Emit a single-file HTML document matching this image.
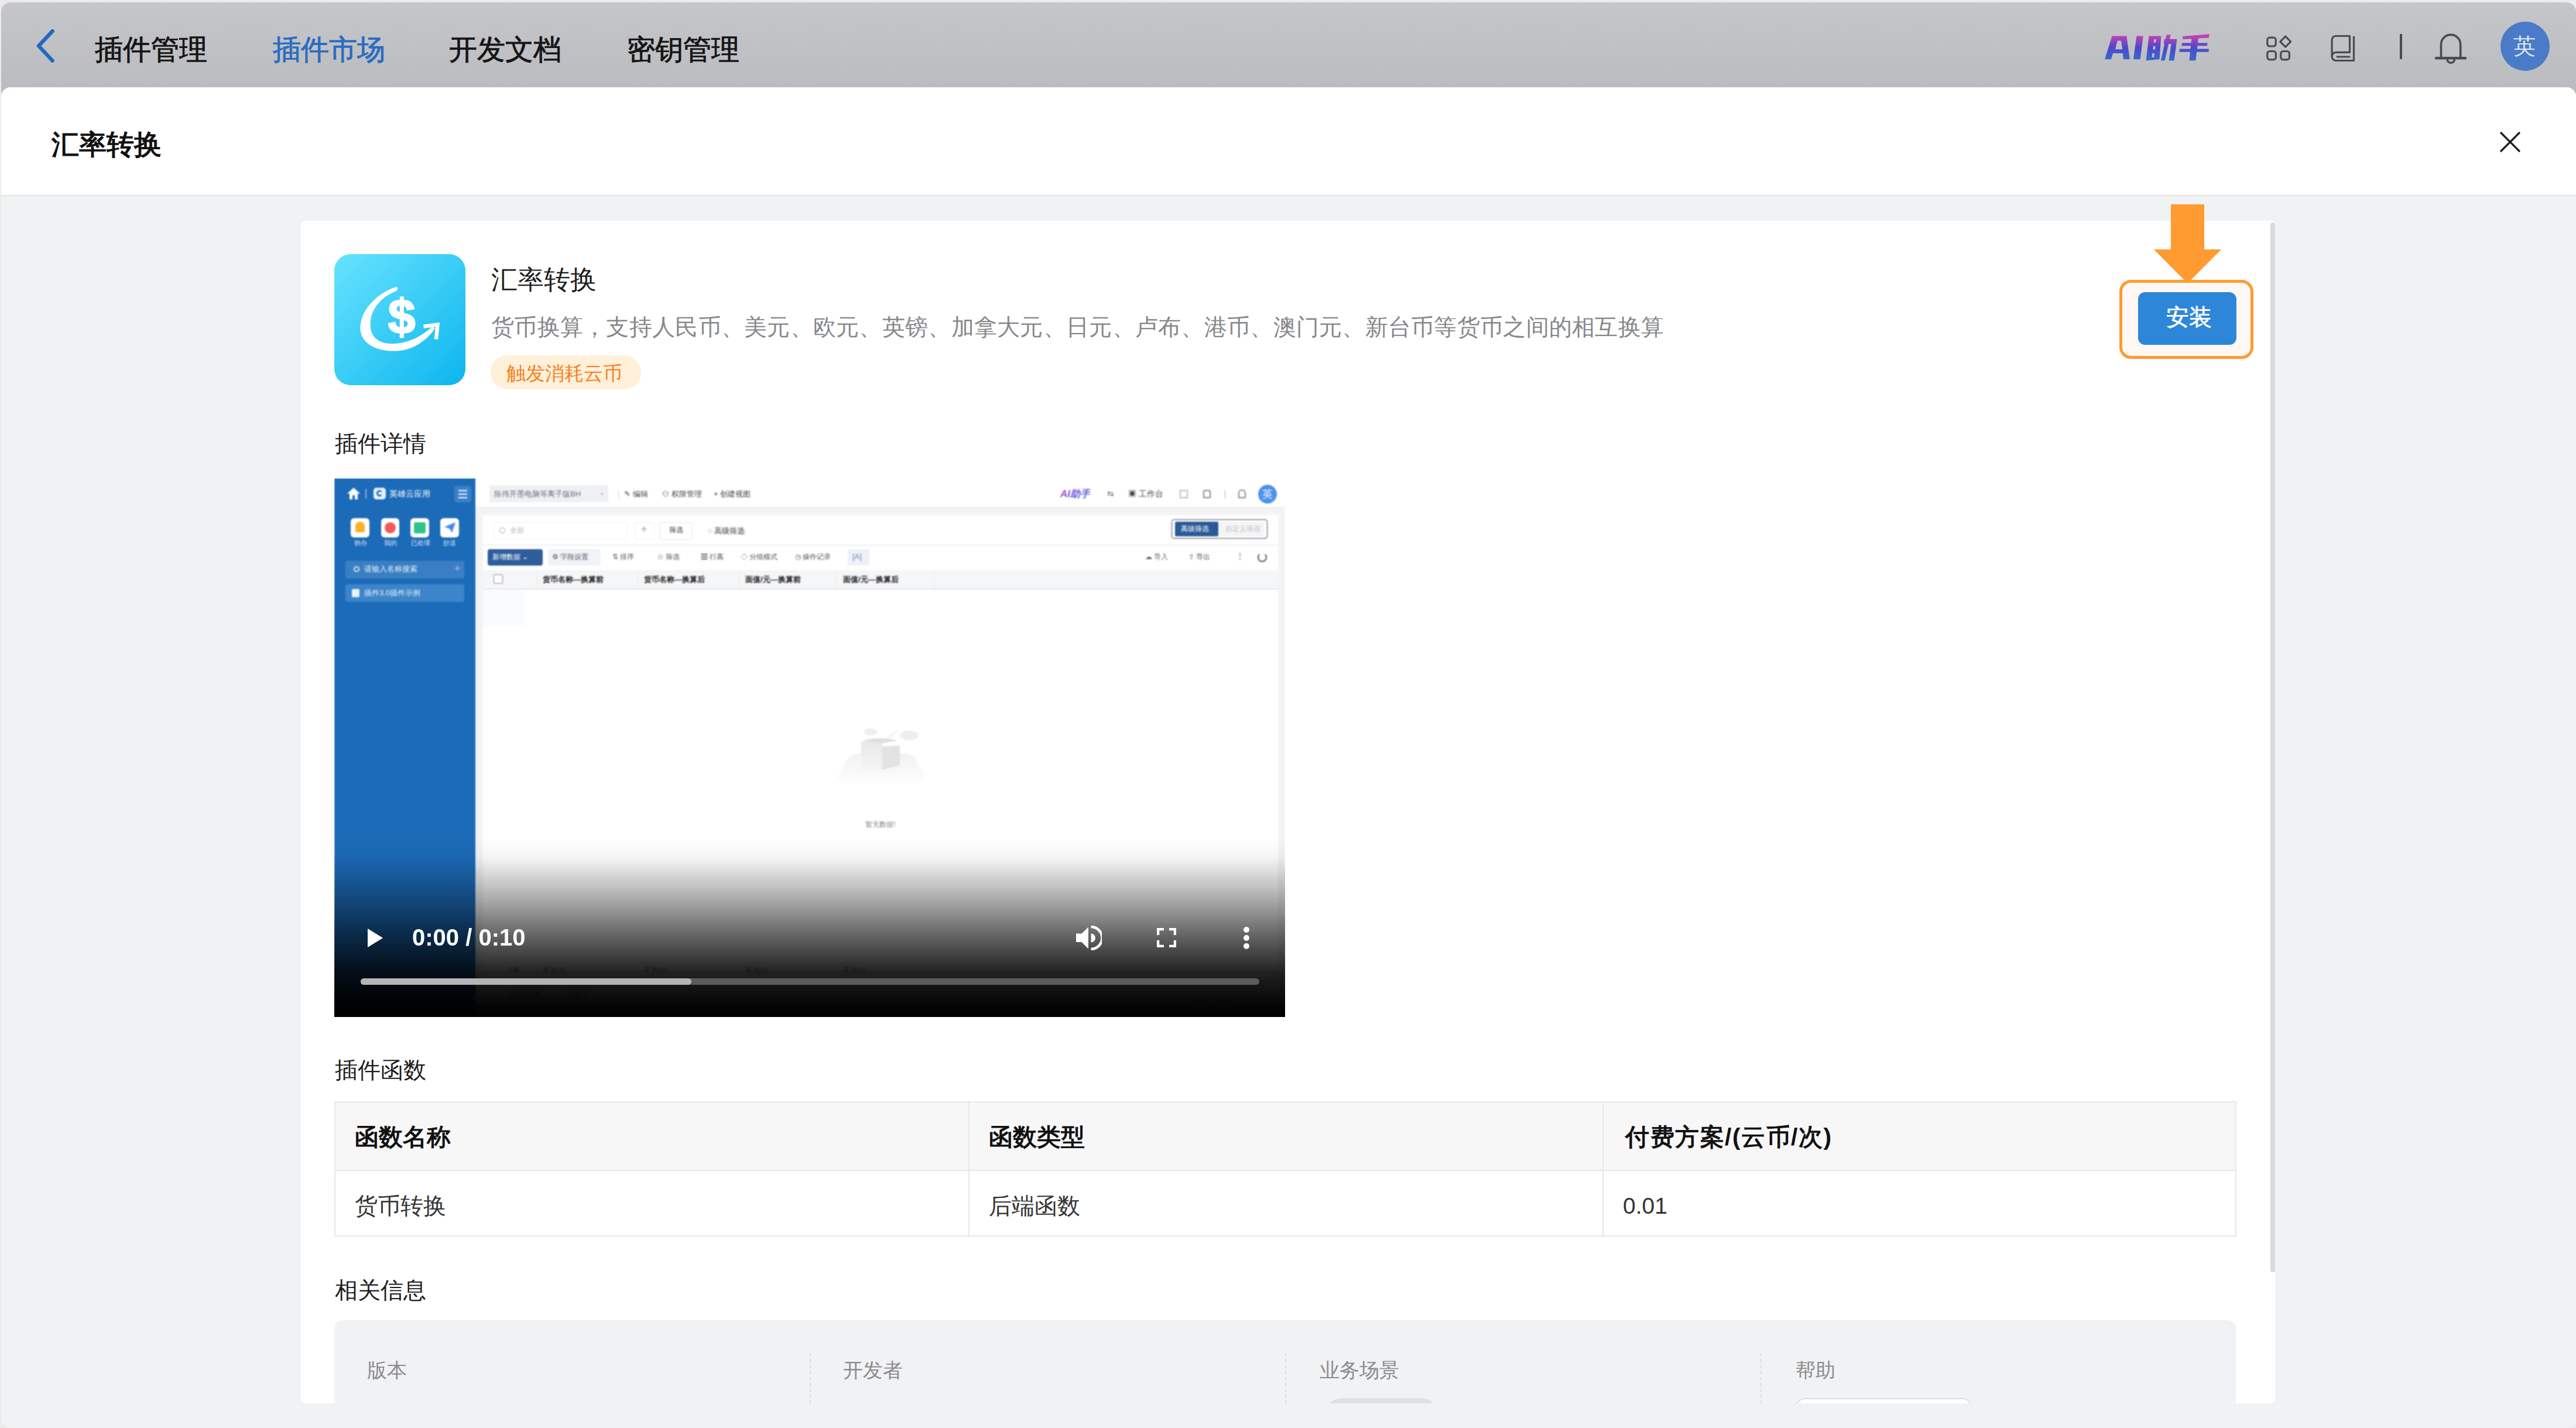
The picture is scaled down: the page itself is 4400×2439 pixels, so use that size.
<!DOCTYPE html>
<html><head><meta charset="utf-8">
<style>
*{box-sizing:border-box;margin:0;padding:0}
html,body{width:4400px;height:2439px;overflow:hidden;background:#ebebeb;font-family:"Liberation Sans",sans-serif}
.a{position:absolute}
.t{position:absolute;line-height:1;white-space:nowrap}
#hdr{left:2px;top:4px;width:4398px;height:160px;border-radius:16px 16px 0 0;background:linear-gradient(#c5c6ca,#babbbf)}
#modal{left:2px;top:149px;width:4398px;height:2290px;border-radius:16px;background:#f1f2f4;overflow:hidden}
#mh{left:0;top:0;width:4398px;height:186px;background:#fff;border-bottom:2px solid #e3e4e6}
#card{left:512px;top:228px;width:3372px;height:2020px;background:#fff;border-radius:8px;overflow:hidden}
</style></head><body>
<!-- top nav -->
<div id="hdr" class="a">
  <svg class="a" style="left:53px;top:42px" width="48" height="72" viewBox="0 0 48 72"><polyline points="34.6,7.2 11,32.4 34.6,57.6" fill="none" stroke="#216abf" stroke-width="6.5" stroke-linecap="round" stroke-linejoin="round"/></svg>
  <div class="t" style="left:160px;top:57px;font-size:48px;color:#151515;-webkit-text-stroke:0.9px #151515">插件管理</div>
  <div class="t" style="left:464px;top:57px;font-size:48px;color:#2a6cc0;-webkit-text-stroke:0.9px #2a6cc0">插件市场</div>
  <div class="t" style="left:765px;top:57px;font-size:48px;color:#151515;-webkit-text-stroke:0.9px #151515">开发文档</div>
  <div class="t" style="left:1069px;top:57px;font-size:48px;color:#151515;-webkit-text-stroke:0.9px #151515">密钥管理</div>
  <svg class="a" style="left:3583px;top:46px" width="200" height="65" viewBox="0 0 200 65"><defs><linearGradient id="aig" x1="0" y1="9" x2="0" y2="54" gradientUnits="userSpaceOnUse"><stop offset="0" stop-color="#cf40b4"/><stop offset="0.5" stop-color="#4d48cc"/><stop offset="1" stop-color="#356ccc"/></linearGradient></defs>
  <g fill="url(#aig)" fill-rule="evenodd">
  <path d="M10.1,51.2 L22.5,11.6 H47.4 L52.8,51.2 H41.9 L41.1,41.1 H24.1 L21,51.2 Z M28,34.2 L31.8,19.4 H38 L40.4,34.2 Z"/>
  <path d="M59,51.2 L64.4,11.6 H75.7 L70.7,51.2 Z"/>
  <path d="M80.7,53.6 L85.4,11.6 H106.4 L103.6,51.2 Z M94.3,17 H97.8 L97.2,22.5 H93.6 Z M93,28.7 H96.6 L96,34.5 H92.2 Z M91.4,41 H95 L94.4,48 H90.6 Z"/>
  <path d="M111.8,16.7 H133.5 L128.5,53.6 H119.5 L123.8,25 H110.8 Z"/>
  <path d="M115.7,9.3 H122.7 L112.6,53.6 H106 Z"/>
  <path d="M142.9,12 L188.7,8.3 L187.9,14.4 L143.6,17 Z"/>
  <path d="M142,23.3 H185.6 L185,28.2 H141.4 Z"/>
  <path d="M138,33.4 H188 L187.4,38.8 H137.4 Z"/>
  <path d="M158.4,15.5 H170 L165.4,53.6 H154.5 Z"/>
  </g></svg>
  <svg class="a" style="left:3864px;top:51px" width="52" height="52" viewBox="0 0 52 52"><g fill="none" stroke="#4a4b50" stroke-width="3.2" stroke-linejoin="round"><rect x="6.8" y="9.1" width="14.4" height="14.9" rx="4"/><rect x="6.8" y="32.5" width="14.6" height="14.4" rx="4"/><rect x="29.8" y="32.5" width="14.6" height="14.4" rx="4"/><path d="M37.7,7.2 L46.7,16.2 L37.7,25.2 L28.7,16.2 Z"/></g></svg>
  <svg class="a" style="left:3975px;top:51px" width="52" height="56" viewBox="0 0 52 56"><g fill="none" stroke="#4a4b50" stroke-width="3.2" stroke-linejoin="round" stroke-linecap="round"><path d="M6.1,42 V13 A6.5,6.5 0 0 1 12.6,6.5 H36.5 V34.3 H13 A7,7 0 0 0 6.1,41.3 A7,7 0 0 0 13,48.5 H43.5 V8"/><path d="M15,42 H36"/></g></svg>
  <div class="a" style="left:4097px;top:54px;width:4px;height:43px;background:#4a4b50"></div>
  <svg class="a" style="left:4154px;top:48px" width="60" height="62" viewBox="0 0 60 62"><g fill="none" stroke="#4a4b50" stroke-width="3.6"><path d="M13.5,47.5 V24 A16.6,16.6 0 0 1 46.7,24 V47.5"/><path d="M5,47.2 H55" stroke-width="4.5" stroke-linecap="round"/><path d="M24,49 A6.3,6.3 0 0 0 36.6,49"/></g></svg>
  <div class="a" style="left:4269px;top:33px;width:84px;height:84px;border-radius:50%;background:#4a7bc8"></div>
  <div class="t" style="left:4291px;top:56px;font-size:38px;color:#dfe4ec">英</div>
</div>
<!-- modal -->
<div id="modal" class="a">
  <div id="mh" class="a">
    <div class="t" style="left:86px;top:74px;font-size:47px;font-weight:bold;color:#111">汇率转换</div>
    <svg class="a" style="left:4264px;top:72px" width="42" height="42" viewBox="0 0 42 42"><g stroke="#1a1a1a" stroke-width="3.2"><path d="M5,5 L38,38 M38,5 L5,38"/></g></svg>
  </div>
  <div id="card" class="a">
    <svg class="a" style="left:57px;top:57px" width="224" height="224" viewBox="0 0 224 224">
      <defs><linearGradient id="ig" x1="0" y1="0" x2="1" y2="1"><stop offset="0" stop-color="#67e3fe"/><stop offset="1" stop-color="#0cb6ee"/></linearGradient></defs>
      <rect width="224" height="224" rx="28" fill="url(#ig)"/>
      <path d="M104,56.5 C76,66 47,92 44.5,122 C42,150 68,166 104,165.5 C132,165 156,150 172,127 L167.5,123.5 C151,139 128,152.5 100,153 C74,153.5 61.5,140 61.5,120 C61.5,96 78,74 105,63.5 C110,61 109,54.5 104,56.5 Z" fill="#fff"/>
      <path d="M152.5,123.5 L176.5,120.5 L174,145.5" fill="none" stroke="#fff" stroke-width="6.5" stroke-linejoin="miter"/>
      <text x="115" y="136" text-anchor="middle" font-family="Liberation Sans" font-weight="bold" font-size="84" fill="#fff" stroke="#fff" stroke-width="2.5">$</text>
    </svg>
    <div class="t" style="left:325px;top:78px;font-size:45px;color:#1d1d1d">汇率转换</div>
    <div class="t" style="left:325px;top:162px;font-size:39px;color:#86878a;letter-spacing:0.28px">货币换算，支持人民币、美元、欧元、英镑、加拿大元、日元、卢布、港币、澳门元、新台币等货币之间的相互换算</div>
    <div class="a" style="left:324px;top:230px;width:257px;height:58px;border-radius:29px;background:#fff0da"></div>
    <div class="t" style="left:351px;top:244px;font-size:33px;color:#f7811c">触发消耗云币</div>
    <div class="a" style="left:3106px;top:101px;width:229px;height:135px;border:5px solid #ff9b30;border-radius:20px;background:#fdf8f3"></div>
    <div class="a" style="left:3138px;top:122px;width:168px;height:90px;border-radius:12px;background:#2e86d9"></div>
    <div class="t" style="left:3186px;top:145px;font-size:39px;color:#fff;-webkit-text-stroke:0.7px #fff">安装</div>
    <div class="t" style="left:58px;top:361px;font-size:39px;color:#1d1d1d">插件详情</div>
    <div id="video" class="a" style="left:57px;top:440px;width:1624px;height:920px;background:#fff;overflow:hidden">
      <div class="a" style="left:0;top:0;width:1624px;height:920px;filter:blur(0.9px)">
      <!-- sidebar -->
      <div class="a" style="left:0;top:0;width:241px;height:920px;background:#1c6bb8"></div>
      <svg class="a" style="left:21px;top:15px" width="24" height="22" viewBox="0 0 24 22"><path d="M12,1 L23,11 H19 V21 H14 V14 H10 V21 H5 V11 H1 Z" fill="#fff"/></svg>
      <div class="a" style="left:53px;top:18px;width:2px;height:17px;background:#8fb6e0"></div>
      <div class="a" style="left:67px;top:16px;width:21px;height:20px;border-radius:5px;background:#e8f1fb"></div>
      <div class="a" style="left:72px;top:20px;width:11px;height:11px;border-radius:50%;border:3px solid #2a77cc;border-right-color:transparent"></div>
      <div class="t" style="left:94px;top:19px;font-size:14px;color:#fff">英雄云应用</div>
      <div class="a" style="left:205px;top:13px;width:29px;height:28px;border-radius:4px;background:#3a80c7"></div>
      <div class="a" style="left:212px;top:20px;width:15px;height:2px;background:#fff;box-shadow:0 6px 0 #fff,0 12px 0 #fff"></div>
      <div class="a" style="left:28px;top:68px;width:32px;height:33px;border-radius:6px;background:#fff"></div>
      <div class="a" style="left:36px;top:74px;width:16px;height:18px;border-radius:8px 8px 2px 2px;background:#fbb12b"></div>
      <div class="a" style="left:80px;top:68px;width:31px;height:33px;border-radius:6px;background:#fff"></div>
      <div class="a" style="left:86px;top:75px;width:19px;height:19px;border-radius:50%;background:#f05a5a"></div>
      <div class="a" style="left:130px;top:68px;width:32px;height:33px;border-radius:6px;background:#fff"></div>
      <div class="a" style="left:136px;top:75px;width:20px;height:19px;border-radius:3px;background:#2fc48d"></div>
      <div class="a" style="left:181px;top:68px;width:32px;height:33px;border-radius:6px;background:#fff"></div>
      <svg class="a" style="left:186px;top:73px" width="22" height="22" viewBox="0 0 22 22"><path d="M2,10 L21,2 L15,20 L11,13 Z" fill="#3e8ef0"/></svg>
      <div class="t" style="left:34px;top:105px;font-size:11px;color:#e6eef8">协办</div>
      <div class="t" style="left:85px;top:105px;font-size:11px;color:#e6eef8">我的</div>
      <div class="t" style="left:131px;top:105px;font-size:11px;color:#e6eef8">已处理</div>
      <div class="t" style="left:186px;top:105px;font-size:11px;color:#e6eef8">抄送</div>
      <div class="a" style="left:19px;top:141px;width:203px;height:30px;border-radius:4px;background:#3a7fc4"></div>
      <div class="a" style="left:33px;top:150px;width:10px;height:10px;border-radius:50%;border:2px solid #dfeaf6"></div>
      <div class="t" style="left:51px;top:148px;font-size:13px;color:#eef4fb">请输入名称搜索</div>
      <div class="t" style="left:205px;top:145px;font-size:18px;color:#a9c8ea">+</div>
      <div class="a" style="left:19px;top:181px;width:203px;height:30px;border-radius:4px;background:#3d85ca"></div>
      <div class="a" style="left:30px;top:189px;width:13px;height:14px;border-radius:2px;background:#e9f1fb"></div>
      <div class="t" style="left:51px;top:189px;font-size:13px;color:#eef4fb">插件3.0插件示例</div>
      <div class="a" style="left:241px;top:157px;width:11px;height:86px;border-radius:0 8px 8px 0;background:#4a8bcc"></div>
      <!-- top header -->
      <div class="a" style="left:241px;top:49px;width:1383px;height:2px;background:#eceef1"></div>
      <div class="a" style="left:241px;top:51px;width:1383px;height:869px;background:#f3f4f6"></div>
      <div class="a" style="left:265px;top:12px;width:203px;height:29px;border-radius:4px;background:#eef0f4"></div>
      <div class="t" style="left:273px;top:20px;font-size:13px;color:#6a6d73">陈伟开墨电脑等离子版BH</div>
      <div class="t" style="left:452px;top:18px;font-size:12px;color:#9a9da3">⌄</div>
      <div class="a" style="left:485px;top:20px;width:1px;height:15px;background:#d0d3d8"></div>
      <div class="t" style="left:495px;top:20px;font-size:13px;color:#3a3d42">✎ 编辑</div>
      <div class="t" style="left:560px;top:20px;font-size:13px;color:#3a3d42">⚇ 权限管理</div>
      <div class="t" style="left:648px;top:20px;font-size:13px;color:#3a3d42">+ 创建视图</div>
      <div class="t" style="left:1240px;top:18px;font-size:17px;font-weight:bold;font-style:italic;background:linear-gradient(160deg,#e23fb0,#5a4fd6 50%,#2a78d8);-webkit-background-clip:text;background-clip:text;color:transparent">AI助手</div>
      <div class="t" style="left:1320px;top:19px;font-size:14px;color:#555">⇆</div>
      <div class="t" style="left:1356px;top:19px;font-size:14px;color:#444">▣ 工作台</div>
      <div class="a" style="left:1444px;top:20px;width:14px;height:14px;border:2px dotted #777"></div>
      <div class="a" style="left:1484px;top:20px;width:13px;height:14px;border:2px solid #888;border-radius:2px"></div>
      <div class="a" style="left:1521px;top:20px;width:1px;height:14px;background:#aaa"></div>
      <div class="a" style="left:1544px;top:19px;width:13px;height:15px;border:2px solid #888;border-radius:6px 6px 1px 1px"></div>
      <div class="a" style="left:1578px;top:11px;width:32px;height:32px;border-radius:50%;background:#4a92ea"></div>
      <div class="t" style="left:1585px;top:18px;font-size:18px;color:#fff">英</div>
      <!-- content card -->
      <div class="a" style="left:254px;top:63px;width:1358px;height:857px;background:#fff"></div>
      <div class="a" style="left:272px;top:75px;width:229px;height:30px;border:1px solid #eceef2;border-radius:3px"></div>
      <div class="a" style="left:282px;top:84px;width:10px;height:10px;border-radius:50%;border:1.5px solid #999"></div>
      <div class="t" style="left:300px;top:83px;font-size:12px;color:#b0b3b8">全部</div>
      <div class="a" style="left:513px;top:75px;width:34px;height:30px;border:1px solid #eceef2;border-radius:3px"></div>
      <div class="t" style="left:523px;top:77px;font-size:20px;color:#aaa">+</div>
      <div class="a" style="left:556px;top:75px;width:55px;height:30px;border:1px solid #e4e6ea;border-radius:3px"></div>
      <div class="t" style="left:572px;top:82px;font-size:12px;color:#333">筛选</div>
      <div class="t" style="left:638px;top:83px;font-size:13px;color:#333">◌ 高级筛选</div>
      <div class="a" style="left:1430px;top:70px;width:164px;height:33px;border:1.5px solid #444;border-radius:4px"></div>
      <div class="a" style="left:1436px;top:74px;width:74px;height:25px;background:#2b5a99;border-radius:2px"></div>
      <div class="t" style="left:1446px;top:80px;font-size:12px;color:#fff">高级筛选</div>
      <div class="a" style="left:1512px;top:74px;width:77px;height:25px;background:#f4f5f7"></div>
      <div class="t" style="left:1522px;top:80px;font-size:12px;color:#c0c3c8">自定义筛选</div>
      <div class="a" style="left:254px;top:113px;width:1358px;height:2px;background:#eef0f3"></div>
      <div class="a" style="left:262px;top:121px;width:94px;height:28px;border-radius:4px;background:#2f5d9c"></div>
      <div class="t" style="left:270px;top:128px;font-size:12px;color:#fff">新增数据 ⌄</div>
      <div class="a" style="left:365px;top:121px;width:90px;height:28px;border-radius:4px;background:#f0f3f8"></div>
      <div class="t" style="left:372px;top:128px;font-size:12px;color:#555">⚙ 字段设置</div>
      <div class="t" style="left:475px;top:128px;font-size:12px;color:#555">⇅ 排序</div>
      <div class="t" style="left:551px;top:128px;font-size:12px;color:#555">☆ 筛选</div>
      <div class="t" style="left:626px;top:128px;font-size:12px;color:#555">☰ 行高</div>
      <div class="t" style="left:694px;top:128px;font-size:12px;color:#555">◇ 分组模式</div>
      <div class="t" style="left:787px;top:128px;font-size:12px;color:#555">◷ 操作记录</div>
      <div class="a" style="left:877px;top:121px;width:37px;height:28px;border-radius:3px;background:#eef2f8"></div>
      <div class="t" style="left:885px;top:127px;font-size:13px;color:#6b87b8">[A]</div>
      <div class="t" style="left:1385px;top:128px;font-size:12px;color:#666">☁ 导入</div>
      <div class="t" style="left:1459px;top:128px;font-size:12px;color:#555">⇧ 导出</div>
      <div class="t" style="left:1540px;top:126px;font-size:14px;color:#555">⋮</div>
      <div class="a" style="left:1577px;top:127px;width:16px;height:16px;border-radius:50%;border:2px solid #555;border-top-color:transparent"></div>
      <div class="a" style="left:254px;top:157px;width:1358px;height:33px;background:#f5f6f8;border-bottom:2px solid #e4e6ea"></div>
      <div class="a" style="left:272px;top:164px;width:16px;height:16px;border:1.5px solid #888;border-radius:2px;background:#fff"></div>
      <div class="a" style="left:346px;top:157px;width:1px;height:33px;background:#e4e6ea"></div>
      <div class="a" style="left:518px;top:157px;width:1px;height:33px;background:#e4e6ea"></div>
      <div class="a" style="left:691px;top:157px;width:1px;height:33px;background:#e4e6ea"></div>
      <div class="a" style="left:857px;top:157px;width:1px;height:33px;background:#e4e6ea"></div>
      <div class="a" style="left:1024px;top:157px;width:1px;height:33px;background:#e4e6ea"></div>
      <div class="t" style="left:356px;top:166px;font-size:13px;font-weight:bold;color:#222">货币名称—换算前</div>
      <div class="t" style="left:529px;top:166px;font-size:13px;font-weight:bold;color:#222">货币名称—换算后</div>
      <div class="t" style="left:702px;top:166px;font-size:13px;font-weight:bold;color:#222">面值/元—换算前</div>
      <div class="t" style="left:869px;top:166px;font-size:13px;font-weight:bold;color:#222">面值/元—换算后</div>
      <div class="a" style="left:254px;top:192px;width:70px;height:60px;background:#fafbfc"></div>
      <svg class="a" style="left:850px;top:420px" width="170" height="100" viewBox="0 0 170 100"><defs><linearGradient id="gr" x1="0" y1="0" x2="0" y2="1"><stop offset="0" stop-color="#f1f1f1"/><stop offset="1" stop-color="#fdfdfd"/></linearGradient><linearGradient id="bf" x1="0" y1="0" x2="0" y2="1"><stop offset="0" stop-color="#e9e9e9"/><stop offset="1" stop-color="#f4f4f4"/></linearGradient></defs>
        <path d="M30,55 Q85,35 140,55 L164,98 H4 Z" fill="url(#gr)"/>
        <path d="M50,29 L86,29 L86,78 L50,78 Z" fill="url(#bf)"/>
        <path d="M86,38 L116,36 L116,70 L86,78 Z" fill="#e3e3e3"/>
        <path d="M54,28 Q82,20 112,28 L86,32 Z" fill="#dedede"/>
        <ellipse cx="66" cy="13" rx="11" ry="6" fill="#eeeeee"/>
        <ellipse cx="132" cy="19" rx="16" ry="8" fill="#eeeeee"/>
        <path d="M88,28 L112,12" stroke="#e5e5e5" stroke-width="1.5"/>
      </svg>
      <div class="t" style="left:907px;top:585px;font-size:12px;color:#888">暂无数据!</div>
      <div class="t" style="left:298px;top:834px;font-size:12px;color:#777">0条</div>
      <div class="a" style="left:346px;top:828px;width:1px;height:25px;background:#ddd"></div>
      <div class="t" style="left:356px;top:834px;font-size:12px;color:#777">不为(1)</div>
      <div class="t" style="left:529px;top:834px;font-size:12px;color:#777">不为(1)</div>
      <div class="t" style="left:702px;top:834px;font-size:12px;color:#777">不为(1)</div>
      <div class="t" style="left:869px;top:834px;font-size:12px;color:#777">不为(1)</div>
      <div class="t" style="left:35px;top:895px;font-size:12px;color:#777">◉ 回收站</div>
      <div class="t" style="left:298px;top:874px;font-size:12px;color:#777">共0条数据</div>
      <div class="t" style="left:395px;top:874px;font-size:12px;color:#777">10条/页</div>
      <div class="t" style="left:1470px;top:885px;font-size:14px;color:#777">‹ &nbsp; 1 &nbsp; 2 &nbsp; ›</div>
      </div>
      <!-- gradient -->
      <div class="a" style="left:0;top:615px;width:1624px;height:305px;background:linear-gradient(rgba(0,0,0,0) 0%,rgba(0,0,0,0.04) 10.8%,rgba(0,0,0,0.3) 32%,rgba(0,0,0,0.6) 53.8%,rgba(0,0,0,0.87) 75%,rgba(0,0,0,0.98) 93%,#000 100%)"></div>
      <!-- controls -->
      <svg class="a" style="left:57px;top:769px" width="26" height="32" viewBox="0 0 26 32"><path d="M0,0 L26,16 L0,32 Z" fill="#fff"/></svg>
      <div class="t" style="left:133px;top:764px;font-size:40px;font-weight:bold;color:#fff">0:00 / 0:10</div>
      <svg class="a" style="left:1267px;top:764px" width="44" height="42" viewBox="0 0 44 42"><path d="M0,13.5 H9.5 L21,2.5 V39.5 L9.5,28 H0 Z" fill="#fff"/><path d="M25.5,13.5 A7.5,7.5 0 0 1 25.5,28.5 Z" fill="#fff"/><path d="M25.5,2 A19,19 0 0 1 25.5,40" fill="none" stroke="#fff" stroke-width="4.5"/></svg>
      <svg class="a" style="left:1405px;top:768px" width="33" height="33" viewBox="0 0 33 33"><path d="M2,12 V2 H12 M21,2 H31 V12 M31,21 V31 H21 M12,31 H2 V21" fill="none" stroke="#fff" stroke-width="4.5"/></svg>
      <div class="a" style="left:1553px;top:766px;width:10px;height:10px;border-radius:50%;background:#fff;box-shadow:0 14px 0 #fff,0 28px 0 #fff"></div>
      <div class="a" style="left:45px;top:854px;width:1535px;height:11px;border-radius:6px;background:#5b5b5b"></div>
      <div class="a" style="left:45px;top:854px;width:565px;height:11px;border-radius:6px;background:#b5b5b5"></div>
    </div>
    <div class="t" style="left:58px;top:1431px;font-size:39px;color:#1d1d1d">插件函数</div>
    <div class="a" style="left:57px;top:1504px;width:3249px;height:231px;border:2px solid #e4e7ee"></div>
    <div class="a" style="left:59px;top:1506px;width:3245px;height:117px;background:#f7f7f8;border-bottom:2px solid #e4e7ee"></div>
    <div class="a" style="left:1140px;top:1506px;width:2px;height:227px;background:#e4e7ee"></div>
    <div class="a" style="left:2223px;top:1506px;width:2px;height:227px;background:#e4e7ee"></div>
    <div class="t" style="left:92px;top:1545px;font-size:41px;font-weight:bold;color:#111">函数名称</div>
    <div class="t" style="left:1175px;top:1545px;font-size:41px;font-weight:bold;color:#111">函数类型</div>
    <div class="t" style="left:2262px;top:1545px;font-size:41px;font-weight:bold;color:#111;letter-spacing:1.5px">付费方案/(云币/次)</div>
    <div class="t" style="left:92px;top:1663px;font-size:39px;color:#333">货币转换</div>
    <div class="t" style="left:1175px;top:1663px;font-size:39px;color:#333">后端函数</div>
    <div class="t" style="left:2258px;top:1663px;font-size:39px;color:#333">0.01</div>
    <div class="t" style="left:58px;top:1807px;font-size:39px;color:#1d1d1d">相关信息</div>
    <div class="a" style="left:57px;top:1878px;width:3248px;height:400px;border-radius:14px;background:#f1f2f4"></div>
    <div class="a" style="left:869px;top:1934px;width:0;height:300px;border-left:2px dashed #dcdde0"></div>
    <div class="a" style="left:1681px;top:1934px;width:0;height:300px;border-left:2px dashed #dcdde0"></div>
    <div class="a" style="left:2493px;top:1934px;width:0;height:300px;border-left:2px dashed #dcdde0"></div>
    <div class="t" style="left:113px;top:1946px;font-size:34px;color:#8b8c8f">版本</div>
    <div class="t" style="left:926px;top:1946px;font-size:34px;color:#8b8c8f">开发者</div>
    <div class="t" style="left:1740px;top:1946px;font-size:34px;color:#8b8c8f">业务场景</div>
    <div class="t" style="left:2553px;top:1946px;font-size:34px;color:#8b8c8f">帮助</div>
    <div class="a" style="left:1748px;top:2011px;width:195px;height:60px;border-radius:30px;background:#dfe0e3"></div>
    <div class="a" style="left:2553px;top:2011px;width:301px;height:60px;border-radius:16px;background:#fff;border:2px solid #dcdfe6"></div>
    <div class="a" style="left:3364px;top:3px;width:8px;height:1793px;border-radius:4px;background:#d9dadc"></div>
  </div>
</div>
<svg class="a" style="left:3679px;top:349px" width="115" height="136" viewBox="0 0 115 136"><path d="M29,0 H86 V77 H115 L57.5,135 L0,77 H29 Z" fill="#ff9b30"/></svg>
</body></html>
